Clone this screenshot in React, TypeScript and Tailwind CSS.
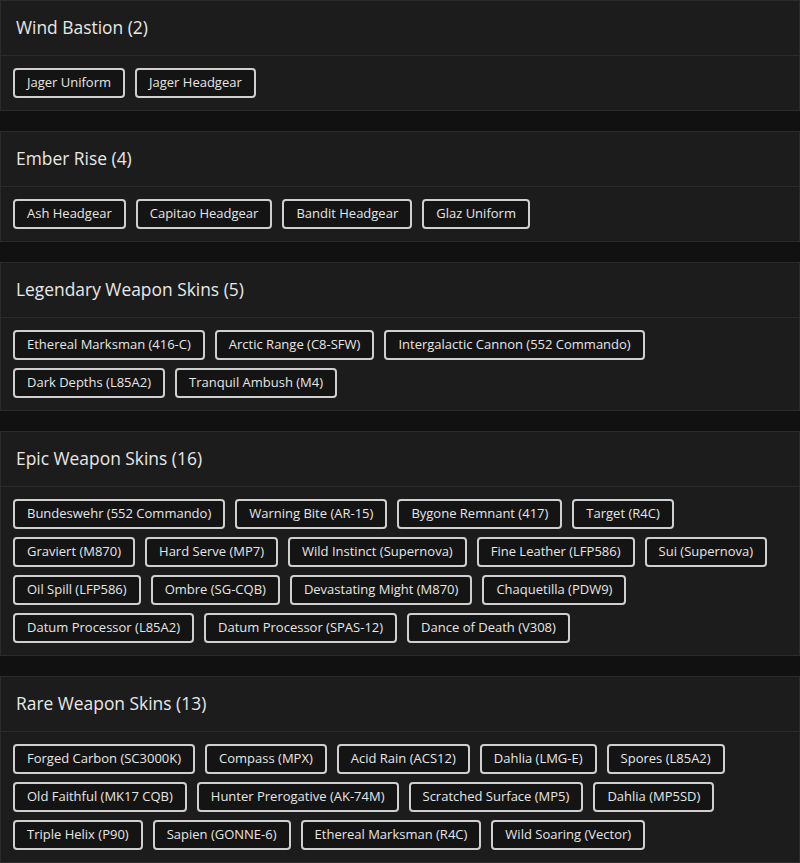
import React from 'react'

interface Section {
  title: string
  items: string[]
}

const sections: Section[] = [
  { title: 'Wind Bastion', items: ['Jager Uniform', 'Jager Headgear'] },
  { title: 'Ember Rise', items: ['Ash Headgear', 'Capitao Headgear', 'Bandit Headgear', 'Glaz Uniform'] },
  {
    title: 'Legendary Weapon Skins',
    items: [
      'Ethereal Marksman (416-C)',
      'Arctic Range (C8-SFW)',
      'Intergalactic Cannon (552 Commando)',
      'Dark Depths (L85A2)',
      'Tranquil Ambush (M4)',
    ],
  },
  {
    title: 'Epic Weapon Skins',
    items: [
      'Bundeswehr (552 Commando)',
      'Warning Bite (AR-15)',
      'Bygone Remnant (417)',
      'Target (R4C)',
      'Graviert (M870)',
      'Hard Serve (MP7)',
      'Wild Instinct (Supernova)',
      'Fine Leather (LFP586)',
      'Sui (Supernova)',
      'Oil Spill (LFP586)',
      'Ombre (SG-CQB)',
      'Devastating Might (M870)',
      'Chaquetilla (PDW9)',
      'Datum Processor (L85A2)',
      'Datum Processor (SPAS-12)',
      'Dance of Death (V308)',
    ],
  },
  {
    title: 'Rare Weapon Skins',
    items: [
      'Forged Carbon (SC3000K)',
      'Compass (MPX)',
      'Acid Rain (ACS12)',
      'Dahlia (LMG-E)',
      'Spores (L85A2)',
      'Old Faithful (MK17 CQB)',
      'Hunter Prerogative (AK-74M)',
      'Scratched Surface (MP5)',
      'Dahlia (MP5SD)',
      'Triple Helix (P90)',
      'Sapien (GONNE-6)',
      'Ethereal Marksman (R4C)',
      'Wild Soaring (Vector)',
    ],
  },
]

function SectionCard({ section }: { section: Section }) {
  return (
    <div className="bg-[#1c1c1c] border border-[#2b2b2b]">
      <div className="h-[55px] flex items-center px-[15px] pb-[2px] border-b border-[#2b2b2b]">
        <h3 className="text-[17.4px] font-medium text-[#e8e8e8]">
          {section.title} ({section.items.length})
        </h3>
      </div>
      <div className="flex flex-wrap gap-x-[10px] gap-y-[8px] p-[12px]">
        {section.items.map((item) => (
          <span
            key={item}
            className="h-[30px] flex items-center px-[12px] rounded-[4px] border-2 border-[#cfcfcf] bg-[#141414] text-[13px] text-[#e6e6e6]"
          >
            {item}
          </span>
        ))}
      </div>
    </div>
  )
}

export default function App() {
  return (
    <div
      className="min-h-screen bg-[#111111] flex flex-col gap-[20px]"
      style={{ fontFamily: '"Open Sans", "Noto Sans", sans-serif' }}
    >
      {sections.map((s) => (
        <SectionCard key={s.title} section={s} />
      ))}
    </div>
  )
}
